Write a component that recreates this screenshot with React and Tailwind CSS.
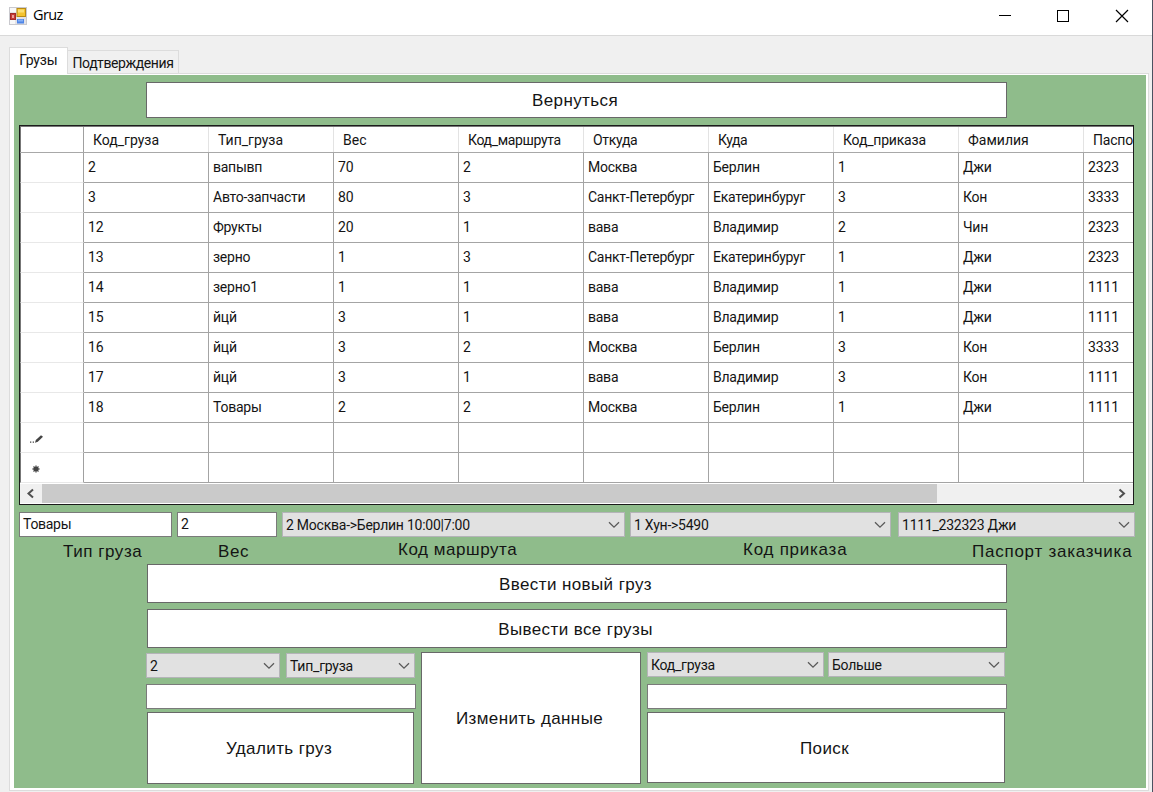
const columns = [
  ['Код_груза', ''],
  ['Тип_груза', ''],
  ['Вес', ''],
  ['Код_маршрута', 'tracking-[-0.35px]'],
  ['Откуда', 'tracking-[-0.3px]'],
  ['Куда', 'tracking-[-0.5px]'],
  ['Код_приказа', 'tracking-[-0.2px]'],
  ['Фамилия', ''],
  ['Паспорт', 'tracking-[-0.2px]'],
];

const rows = [
  ['2', 'вапывп', '70', '2', 'Москва', 'Берлин', '1', 'Джи', '2323'],
  ['3', 'Авто-запчасти', '80', '3', 'Санкт-Петербург', 'Екатеринбуруг', '3', 'Кон', '3333'],
  ['12', 'Фрукты', '20', '1', 'вава', 'Владимир', '2', 'Чин', '2323'],
  ['13', 'зерно', '1', '3', 'Санкт-Петербург', 'Екатеринбуруг', '1', 'Джи', '2323'],
  ['14', 'зерно1', '1', '1', 'вава', 'Владимир', '1', 'Джи', '1111'],
  ['15', 'йцй', '3', '1', 'вава', 'Владимир', '1', 'Джи', '1111'],
  ['16', 'йцй', '3', '2', 'Москва', 'Берлин', '3', 'Кон', '3333'],
  ['17', 'йцй', '3', '1', 'вава', 'Владимир', '3', 'Кон', '1111'],
  ['18', 'Товары', '2', '2', 'Москва', 'Берлин', '1', 'Джи', '1111'],
  ['', '', '', '', '', '', '', '', ''],
  ['', '', '', '', '', '', '', '', ''],
];

function Chevron() {
  return (
    <svg width="12" height="8" viewBox="0 0 12 8" className="shrink-0" fill="none" stroke="#5a5a5a" strokeWidth="1.3">
      <path d="M1 1.2 6 6.2 11 1.2" />
    </svg>
  );
}

function Combo({ className, children }) {
  return (
    <div className={`flex h-[25px] shrink-0 items-center justify-between border border-[#b4b4b8] bg-[#e1e1e1] pr-[4px] pl-[3px] tracking-[-0.24px] ${className}`}>
      <span className="whitespace-pre">{children}</span>
      <Chevron />
    </div>
  );
}

function Field({ className, children }) {
  return (
    <div className={`flex h-[25px] shrink-0 items-center border border-[#7a7a7a] bg-white pb-[1px] pl-[3px] tracking-[-0.3px] ${className}`}>{children}</div>
  );
}

function Button({ className, children }) {
  return (
    <button className={`flex shrink-0 items-center justify-center border border-[#686868] bg-white pt-[2px] pr-[3px] font-['Liberation_Sans',sans-serif] text-[17px] tracking-[0.4px] ${className}`}>
      {children}
    </button>
  );
}

function TitleBar() {
  return (
    <div className="flex h-[36px] shrink-0 items-center border-b border-[#d9d9d9] bg-white pb-[4px] text-black">
      <svg width="18" height="18" viewBox="0 0 18 18" className="ml-[9px]">
        <rect x="0.5" y="0.5" width="17" height="17" fill="#e2e2e6" stroke="#c9c9ce" />
        <path d="M1 1h6v4H1zM1 13h5v4H1z" fill="#f8f8f8" />
        <rect x="8" y="1.5" width="8.5" height="8" fill="#f4c32f" stroke="#b98b14" />
        <rect x="9" y="2.5" width="6" height="3" fill="#fbdf74" />
        <rect x="1.5" y="6.5" width="5" height="6" fill="#c63a35" stroke="#a02a28" />
        <rect x="3" y="8" width="2" height="3" fill="#eb9d98" />
        <rect x="8" y="12" width="7" height="4.5" fill="#4f86e8" />
        <rect x="9" y="12.5" width="5" height="2" fill="#86b0f5" />
      </svg>
      <span className="ml-[6px] pb-[2px] font-['Open_Sans',sans-serif] text-[14.5px] tracking-[-0.6px]">Gruz</span>
      <svg width="130" height="14" viewBox="0 0 130 14" className="mr-[23px] ml-auto" fill="none" stroke="#000" strokeWidth="1" shapeRendering="crispEdges">
        <path d="M0 6.5H12" />
        <rect x="58.5" y="1.5" width="11" height="11" />
        <path d="M117 1 129 13M129 1 117 13" shapeRendering="auto" strokeWidth="1.2" />
      </svg>
    </div>
  );
}

function Tabs() {
  return (
    <div className="flex h-[26px] shrink-0 items-end pl-[9px]">
      <div className="relative z-10 -mb-px flex h-[27px] w-[59px] justify-center border border-b-0 border-[#dcdcdc] bg-white pt-[2px] tracking-[-0.1px]">Грузы</div>
      <div className="flex h-[23px] w-[111px] items-center justify-center border border-b-0 border-l-0 border-[#dcdcdc] bg-[#f0f0f0] pt-[1px] tracking-[-0.4px]">
        Подтверждения
      </div>
    </div>
  );
}

function RowMarker({ index }) {
  if (index === 9) {
    return (
      <svg width="14" height="10" viewBox="0 0 14 10" fill="#444">
        <path d="M0 7.4h1.3v1.3H0zM2.7 7.4H4v1.3H2.7z" />
        <path d="M5 8.8 5.8 6 11 1.2 13 2.8 7.8 7.8z" />
      </svg>
    );
  }
  if (index === 10) {
    return (
      <svg width="8" height="8" viewBox="0 0 8 8" className="ml-[2px]" stroke="#444" strokeWidth="1.3">
        <circle cx="4" cy="4" r="2.3" fill="#444" stroke="none" />
        <path d="M4 .5v7M.5 4h7M1.5 1.5l5 5M6.5 1.5l-5 5" />
      </svg>
    );
  }
  return null;
}

function DataGrid() {
  return (
    <div className="ml-[5px] flex h-[380px] w-[1115px] shrink-0 flex-col overflow-hidden border border-[#1c1c1c] bg-white">
      <div className="flex h-[27px] shrink-0 border-t border-b border-t-[#777] border-b-[#a8a8a8]">
        <div className="w-[64px] shrink-0 border-r border-l border-r-[#a0a0a0] border-l-[#777]" />
        {columns.map(([name, tracking]) => (
          <div key={name} className={`flex w-[125px] shrink-0 items-center border-r border-[#e3e3e3] pt-[1px] pl-[9px] ${tracking}`}>{name}</div>
        ))}
      </div>
      {rows.map((r, i) => (
        <div key={i} className="flex h-[30px] shrink-0">
          <div className="flex w-[64px] shrink-0 items-center border-r border-b border-l border-r-[#a0a0a0] border-b-[#e8e8e8] border-l-[#777] pt-[3px] pl-[9px]">
            <RowMarker index={i} />
          </div>
          {r.map((v, j) => (
            <div key={j} className={`flex w-[125px] shrink-0 items-center border-r border-b border-[#a4a4a4] pb-[1px] pl-[4px] whitespace-nowrap ${/^\d/.test(v) ? 'tracking-[-0.1px]' : 'tracking-[-0.25px]'}`}>{v}</div>
          ))}
        </div>
      ))}
      <div className="mt-[1px] flex h-[19px] shrink-0 items-center bg-[#f0f0f0]">
        <svg width="22" height="19" viewBox="0 0 22 19" fill="none" stroke="#505050" strokeWidth="2">
          <path d="M13 5.5 8.5 9.5l4.5 4" />
        </svg>
        <div className="h-full w-[895px] bg-[#cacaca]" />
        <svg width="21" height="19" viewBox="0 0 21 19" className="ml-auto" fill="none" stroke="#505050" strokeWidth="2">
          <path d="M7.5 5.5 12 9.5l-4.5 4" />
        </svg>
      </div>
    </div>
  );
}

function Labels() {
  return (
    <div className="flex h-[27px] shrink-0 pl-[49px] font-['Liberation_Sans',sans-serif] text-[17px] leading-[24px] tracking-[0.55px] whitespace-nowrap">
      <span className="w-[155px] pt-[3px]">Тип груза</span>
      <span className="w-[180px] pt-[3px]">Вес</span>
      <span className="w-[345px] pt-[1px]">Код маршрута</span>
      <span className="w-[229px] pt-[1px] tracking-[0.75px]">Код приказа</span>
      <span className="pt-[3px] tracking-[0.75px]">Паспорт заказчика</span>
    </div>
  );
}

export default function App() {
  return (
    <div className="flex h-[792px] w-[1153px] overflow-hidden bg-[#f0f0f0] font-['Roboto',sans-serif] text-[14px] leading-[20px] text-[#141414]">
      <div className="flex w-[1152px] shrink-0 flex-col">
        <TitleBar />
        <div className="h-[11px] shrink-0" />
        <Tabs />
        <div className="ml-[9px] flex h-[718px] w-[1140px] shrink-0 flex-col border border-[#dcdcdc] bg-white pt-[1px] pl-[4px]">
          <div className="flex h-[713px] w-[1132px] shrink-0 flex-col bg-[#8fbc8b] pt-[7px]">
            <Button className="ml-[132px] h-[36px] w-[861px]">Вернуться</Button>
            <div className="h-[7px] shrink-0" />
            <DataGrid />
            <div className="mt-[7px] flex shrink-0 pl-[5px]">
              <Field className="w-[153px]">Товары</Field>
              <Field className="ml-[5px] w-[100px]">2</Field>
              <Combo className="ml-[5px] w-[343px]">2 Москва-&gt;Берлин 10:00|7:00</Combo>
              <Combo className="ml-[5px] w-[261px]">1 Хун-&gt;5490</Combo>
              <Combo className="ml-[7px] w-[237px]">1111_232323 Джи</Combo>
            </div>
            <Labels />
            <Button className="ml-[133px] h-[39px] w-[860px]">Ввести новый груз</Button>
            <Button className="mt-[6px] ml-[133px] h-[39px] w-[860px]">Вывести все грузы</Button>
            <div className="mt-[4px] flex pl-[132px]">
              <div className="flex w-[270px] flex-col pt-[1px]">
                <div className="flex gap-[6px]">
                  <Combo className="w-[134px]">2</Combo>
                  <Combo className="w-[129px]">Тип_груза</Combo>
                </div>
                <Field className="mt-[6px]" />
                <Button className="mt-[3px] ml-[1px] h-[72px] w-[267px]">Удалить груз</Button>
              </div>
              <Button className="ml-[5px] h-[132px] w-[220px]">Изменить данные</Button>
              <div className="ml-[6px] flex w-[360px] flex-col">
                <div className="flex">
                  <Combo className="w-[177px]">Код_груза</Combo>
                  <Combo className="ml-[4px] w-[177px]">Больше</Combo>
                </div>
                <Field className="mt-[7px]" />
                <Button className="mt-[3px] h-[71px] w-[358px]">Поиск</Button>
              </div>
            </div>
          </div>
        </div>
      </div>
      <div className="w-px bg-[#4b5261]" />
    </div>
  );
}
